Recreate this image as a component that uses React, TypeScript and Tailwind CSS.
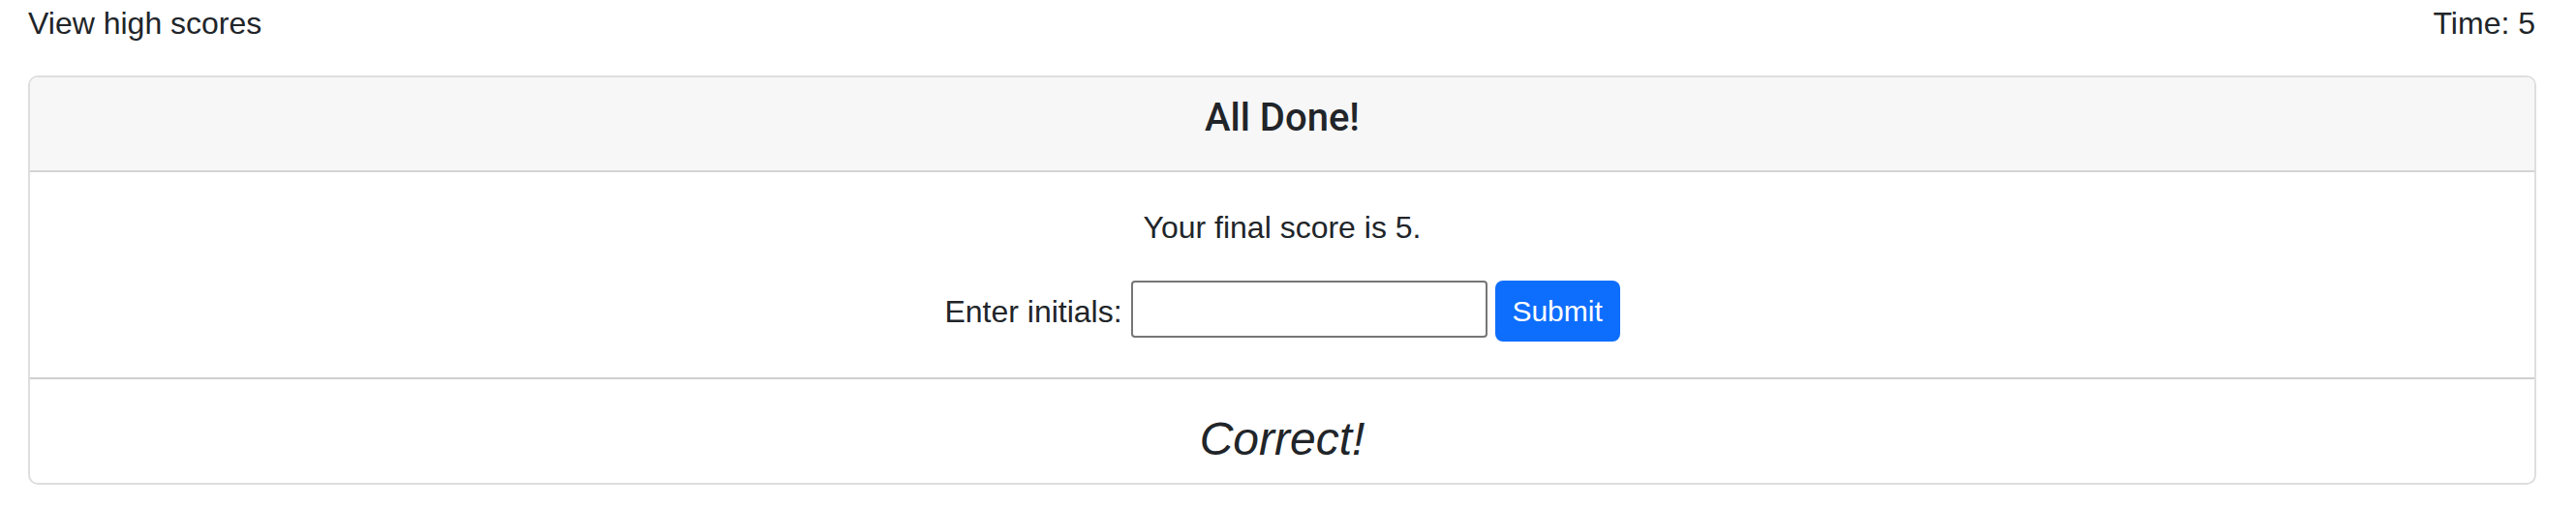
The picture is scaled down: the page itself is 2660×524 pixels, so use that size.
export default function App() {
  return (
    <div className="min-h-screen bg-white text-[#212529] font-['Liberation_Sans',Arial,sans-serif]">
      <header className="flex justify-between pl-[29px] pr-[42px] text-[32px] leading-[48px]">
        <a href="#">View high scores</a>
        <span>Time: 5</span>
      </header>

      <section className="mt-[30px] ml-[29px] mr-[41px] border-2 border-[#dedede] rounded-[10px] overflow-hidden">
        <div className="h-[98px] pt-[18px] bg-[#f7f7f7] border-b-2 border-[#d4d4d4] text-center">
          <h2 className="font-['Roboto',sans-serif] font-medium text-[40px] leading-[48px]">All Done!</h2>
        </div>

        <div className="h-[214px] pt-[33px] border-b-2 border-[#cfcfcf] text-center text-[32px] leading-[48px]">
          <p>Your final score is 5.</p>
          <form className="mt-[31px] flex justify-center items-start">
            <label htmlFor="initials" className="mt-[8px]">
              Enter initials:
            </label>
            <input
              id="initials"
              type="text"
              className="ml-[9px] w-[368px] h-[59px] border-2 border-[#767676] rounded-[4px] px-2 text-[32px]"
            />
            <button
              type="button"
              className="ml-[8px] w-[129px] h-[63px] rounded-[8px] bg-[#0d6efd] text-white text-[30px] leading-[48px]"
            >
              Submit
            </button>
          </form>
        </div>

        <div className="h-[107px] pt-[33px] text-center">
          <p className="italic text-[48px] leading-[57px]">Correct!</p>
        </div>
      </section>
    </div>
  );
}
